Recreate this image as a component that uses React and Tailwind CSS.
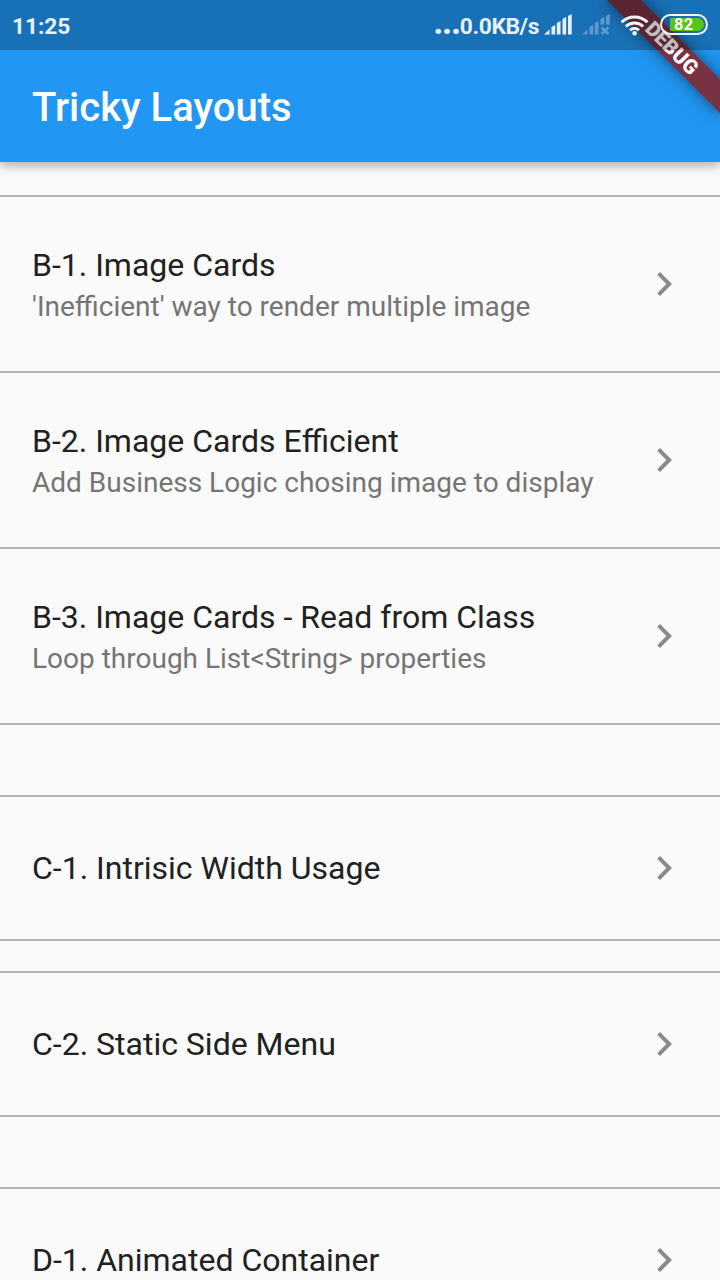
import React from "react";

const sections = [
  [
    { title: "B-1. Image Cards", subtitle: "'Inefficient' way to render multiple image" },
    { title: "B-2. Image Cards Efficient", subtitle: "Add Business Logic chosing image to display" },
    { title: "B-3. Image Cards - Read from Class", subtitle: "Loop through List<String> properties" },
  ],
  [{ title: "C-1. Intrisic Width Usage" }],
  [{ title: "C-2. Static Side Menu" }],
  [{ title: "D-1. Animated Container" }],
];

const sectionGaps = ["mt-[33px]", "mt-[70px]", "mt-[30px]", "mt-[70px]"];

function Chevron() {
  return (
    <svg className="size-12 shrink-0" viewBox="0 0 24 24" fill="#8b8b8b">
      <path d="M10 6L8.59 7.41 13.17 12l-4.58 4.59L10 18l6-6z" />
    </svg>
  );
}

function Tile({ title, subtitle }) {
  return (
    <li
      className={
        "flex items-center justify-between border-b-2 border-[#b4b4b4] px-8 " +
        (subtitle ? "h-[176px]" : "h-[144px]")
      }
    >
      <div className={"whitespace-nowrap " + (subtitle ? "pt-1" : "")}>
        <div className="text-[32px] leading-[38px] text-[#212121]">{title}</div>
        {subtitle && <div className="mt-1 text-[28px] leading-[38px] text-[#757575]">{subtitle}</div>}
      </div>
      <Chevron />
    </li>
  );
}

function Signal() {
  return (
    <svg className="h-[50px] w-[28px]" viewBox="0 0 28 50" fill="#e8f0f7">
      <path d="M0 34.600L5.500 29.500v5.100zM7.500 27l3.700-2v9.600H7.500zM12.800 23l3.700-2v13.600H12.800zM18.500 19l3.700-2v17.600h-3.700zM24 16l3.700-2v20.600h-3.700z" />
    </svg>
  );
}

function NoSignal() {
  return (
    <svg className="h-[50px] w-[28px]" viewBox="0 0 28 50" fill="#5f9aca">
      <path d="M0 34.600L5.500 29.500v5.100zM7.500 27l3.700-2v9.600H7.500zM12.800 23l3.700-2v13.600H12.800zM18.500 19l3.700-2v7.600h-3.700zM24 16l3.700-2v10.600h-3.700z" />
      <path d="M19.500 27.500l7 6.500M26.500 27.500l-7 6.500" stroke="#5f9aca" strokeWidth="2.400" />
    </svg>
  );
}

function Wifi() {
  return (
    <svg className="h-[50px] w-[30px]" viewBox="0 0 30 50" fill="none" stroke="#f4f4f4" strokeWidth="2.900">
      <path d="M1.500 22.300a18.500 18.500 0 0 1 26 0" />
      <path d="M5.800 26.500a12.700 12.700 0 0 1 17.400 0" />
      <path d="M10 30.300a6.700 6.700 0 0 1 9 0" />
      <circle cx="14.600" cy="33.200" r="2.300" fill="#f4f4f4" stroke="none" />
    </svg>
  );
}

function Battery() {
  return (
    <div className="h-[21px] w-12 rounded-full border-2 border-[#f4f4f4] py-0.5 pr-0.5 pl-2">
      <div className="flex h-[13px] items-center rounded-l-[2px] rounded-r-[7px] bg-[#55c517] pt-px pl-1 text-[16.500px] leading-none font-bold tracking-[0.4px] text-white">
        82
      </div>
    </div>
  );
}

export default function App() {
  return (
    <div className="relative h-[1280px] w-[720px] overflow-hidden bg-[#fafafa] font-['Roboto',sans-serif]">
      <header className="flex h-[162px] flex-col justify-end bg-[#2196f3] shadow-[0_4px_10px_rgba(0,0,0,0.3)]">
        <div className="flex h-[112px] items-center px-8 pt-0.5">
          <h1 className="text-[40px] leading-[47px] font-medium text-white">Tricky Layouts</h1>
        </div>
      </header>
      <main>
        {sections.map((items, i) => (
          <ul key={items[0].title} className={"border-t-2 border-[#b4b4b4] " + sectionGaps[i]}>
            {items.map((item) => (
              <Tile key={item.title} {...item} />
            ))}
          </ul>
        ))}
      </main>

      <div className="absolute top-0 left-[720px] h-0 w-0 rotate-45">
        <div className="absolute top-[56px] -left-[80px] flex h-6 w-[160px] items-center justify-center bg-[rgba(144,22,22,0.795)] text-[20.4px] leading-6 font-black text-white shadow-[0_0_16px_rgba(0,0,0,0.5)]">
          DEBUG
        </div>
      </div>

      <div className="absolute inset-x-0 top-0 flex h-[50px] justify-between bg-black/25 pr-3 pl-3 text-[#e8f0f7]">
        <span className="pt-0.5 text-[22.800px] leading-[50px] font-bold tracking-[-0.1px]">11:25</span>
        <div className="flex h-[50px]">
          <div className="flex w-[111px] items-baseline justify-end font-bold whitespace-nowrap">
            <span className="text-[35px] leading-[46px] tracking-[-1.300px]">...</span>
            <span className="text-[22.800px] leading-[44px] tracking-[-0.4px]">0.0KB/s</span>
          </div>
          <div className="ml-[5px] flex">
            <Signal />
          </div>
          <div className="ml-[10px] flex">
            <NoSignal />
          </div>
          <div className="ml-[10px] flex">
            <Wifi />
          </div>
          <div className="mt-[14px] ml-[10px]">
            <Battery />
          </div>
        </div>
      </div>
    </div>
  );
}
